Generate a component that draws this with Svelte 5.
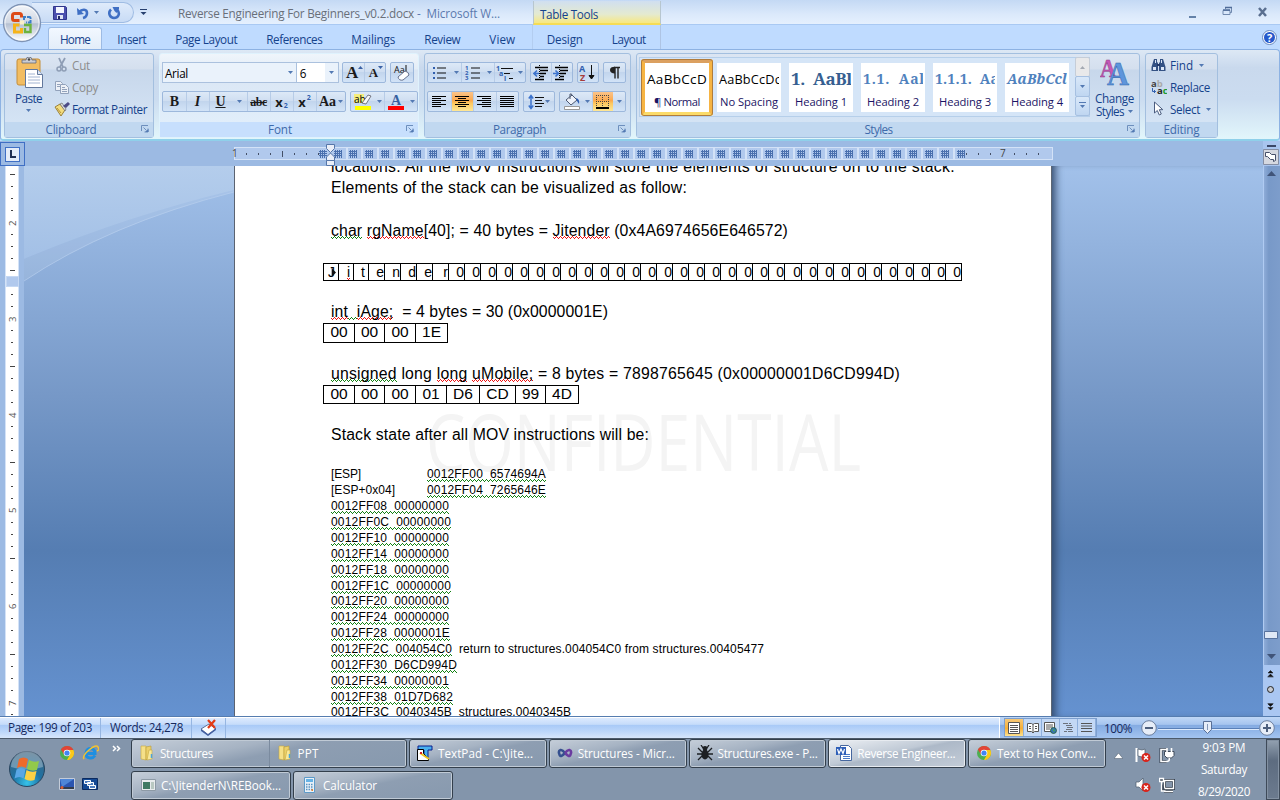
<script>
  // Spreads the letters of a label over the given width.
  function fit(node, w) {
    if (!w) return;
    const n = [...node.textContent].length;
    const now = node.getBoundingClientRect().width;
    node.style.letterSpacing = `${(w - now) / n}px`;
  }

  const tabs = [
    ['Insert', 29], ['Page Layout', 62], ['References', 56], ['Mailings', 44], ['Review', 36], ['View', 26]
  ];
  const styles = [
    ['AaBbCcD', '¶ Normal', 'plain', 60, 46],
    ['AaBbCcDc', 'No Spacing', 'plain small', 62, 58],
    ['1.  AaBl', 'Heading 1', 'h1', 61, 52],
    ['1.1.  Aal', 'Heading 2', 'h2', 62, 52],
    ['1.1.1.  Aa', 'Heading 3', 'h3', 64, 52],
    ['AaBbCcl', 'Heading 4', 'h4', 60, 52]
  ];
  const bytes = [...'Jitender', ...Array(32).fill('0')];
  const byteWidth = (i) => (i < 3 ? 15 : i === 29 ? 17 : 16);
  const gap = '  ';
  const age = [['00', 31], ['00', 30], ['00', 31], ['1E', 32]];
  const mobile = [['00', 31], ['00', 30], ['00', 31], ['01', 31], ['D6', 33], ['CD', 36], ['99', 30], ['4D', 33]];
  const dump = [
    ['0012FF08  00000000', 118], ['0012FF0C  00000000', 120], ['0012FF10  00000000', 118],
    ['0012FF14  00000000', 118], ['0012FF18  00000000', 118], ['0012FF1C  00000000', 120],
    ['0012FF20  00000000', 118], ['0012FF24  00000000', 118], ['0012FF28  0000001E', 119],
    ['0012FF2C  004054C0', 121, '  return to structures.004054C0 from structures.00405477', 312],
    ['0012FF30  D6CD994D', 126], ['0012FF34  00000001', 118], ['0012FF38  01D7D682', 122],
    ['0012FF3C  0040345B', 121, '  structures.0040345B', 119]
  ];
  const cols = [338, 353, ...Array.from({ length: 37 }, (_, i) => 369 + i * 16), 961].filter((x) => x < 962);
  const vnums = [[2, 223], [3, 319], [4, 415], [5, 510], [6, 606], [7, 703]];
  const vticks = Array.from({ length: 46 }, (_, i) => 174 + i * 12).filter((y) => y < 716);
</script>

{#snippet t(s, w, cls = '')}<span class="t {cls}" use:fit={w}>{s}</span>{/snippet}
{#snippet arrow()}<svg class="arrow" width="5" height="3"><path d="M0 0h5L2.500 3z" fill="#5379b3" /></svg>{/snippet}
{#snippet launcher()}<svg class="launch" width="8" height="8" fill="none"><path d="M.5 6V.5H7" stroke="#6d8fbd" /><path d="M2.500 2.500l3 3M7 3.500V7H3.500" stroke="#6d8fbd" /><path d="M4 7h3.500V4z" fill="#5379b3" /></svg>{/snippet}
{#snippet lines(kind)}
  <svg width="16" height="16" shape-rendering="crispEdges"><path stroke="#000" d={
    kind === 'left' ? 'M1 2.500h14M1 4.500h9M1 6.500h14M1 8.500h9M1 10.500h14M1 12.500h9' :
    kind === 'center' ? 'M1 2.500h14M4 4.500h8M1 6.500h14M4 8.500h8M1 10.500h14M4 12.500h8' :
    kind === 'right' ? 'M1 2.500h14M6 4.500h9M1 6.500h14M6 8.500h9M1 10.500h14M6 12.500h9' : 'M1 2.500h14M1 4.500h14M1 6.500h14M1 8.500h14M1 10.500h14M1 12.500h14'} /></svg>
{/snippet}
{#snippet folder()}
  <svg width="14" height="16"><path d="M1 1h5v14l-5-1z" fill="#f5e089" stroke="#c8a93c" stroke-width=".6" /><path d="M6 2l5-1v11l-5 3z" fill="#ecd06a" stroke="#b99b35" stroke-width=".6" /><path d="M9 5h3v9l-5 1z" fill="#f8e89b" stroke="#c8a93c" stroke-width=".6" /><path d="M11.500 9v4" stroke="#4aa4dc" stroke-width="1.500" /></svg>
{/snippet}
{#snippet chrome()}
  <svg width="16" height="16" viewBox="0 0 16 16"><circle cx="8" cy="8" r="7" fill="#4caf50" /><path d="M14.400 5A7 7 0 0 1 8 15l3-5.500L9 5z" fill="#fbc819" /><path d="M1.900 4.500A7 7 0 0 1 14.400 5H8L5 9.500z" fill="#e24436" /><circle cx="8" cy="8" r="3.300" fill="#fff" /><circle cx="8" cy="8" r="2.600" fill="#4285f4" /></svg>
{/snippet}
{#snippet grid(items, cls)}
  <div class="cells {cls}">
    {#each items as [s, w]}<div class="cell" style="width:{w}px">{s}</div>{/each}
  </div>
{/snippet}

<div class="screen">
  <div class="top">
    <header class="title">
      <div class="qat">
        <svg width="14" height="14"><path d="M.5.5h12l1 1v12H.5z" fill="#4b4fae" stroke="#30358c" /><path d="M3 1h8v6H3z" fill="#f4f6ff" /><path d="M4 9h6v4H4z" fill="#dfe4f4" /><path d="M5 10h2v3H5z" fill="#222a66" /></svg>
        <svg class="undo" width="14" height="14" fill="none"><path d="M3 6.500C6 2.500 11 3 11 7c0 2.500-2 4.500-4 5" stroke="#3f6fc4" stroke-width="2.600" /><path d="M1 2l.5 7L8 8z" fill="#3f6fc4" /></svg>
        {@render arrow()}
        <svg class="redo" width="14" height="14" fill="none"><path d="M10.500 4C13.500 8 11 12 7 12S.5 7 4 3.500" stroke="#3f6fc4" stroke-width="2.600" /><path d="M5.500 1H12v2L9.500 7l-2-2z" fill="#3f6fc4" /></svg>
      </div>
      <svg class="more" width="7" height="7"><path d="M0 .5h7" stroke="#27406f" /><path d="M.5 3h6l-3 3z" fill="#27406f" /></svg>
      <div class="doc-title">{@render t('Reverse Engineering For Beginners_v0.2.docx', 236, 'grey')}{@render t(' -  Microsoft W...', 86, 'ms')}</div>
      <div class="tools">{@render t('Table Tools', 58)}</div>
      <svg class="winbtns" width="86" height="14" fill="none">
        <path d="M1 12h7" stroke="#6482a9" stroke-width="2" />
        <path d="M37.500 4V2.500h6v5H42M35 5.500h7v4h-7z" stroke="#7089ae" /><path d="M35 5h7M37 2.500h7" stroke="#4f6c99" stroke-width="1.500" />
        <path d="M71 3l7 8M78 3l-7 8" stroke="#5a6f90" stroke-width="2.500" />
      </svg>
    </header>
    <nav class="tabs">
      <div class="tab home">{@render t('Home', 30)}</div>
      {#each tabs as [s, w]}<div class="tab">{@render t(s, w)}</div>{/each}
      <div class="ctx"><div class="tab">{@render t('Design', 36)}</div><div class="tab">{@render t('Layout', 34)}</div></div>
      <svg class="help" width="15" height="15"><circle cx="7.500" cy="7.500" r="7" fill="#fff" stroke="#6787bd" /><circle cx="7.500" cy="7.500" r="5.500" fill="#2558cc" /><text x="7.500" y="11.500" text-anchor="middle" font-size="11" font-weight="700" fill="#fff">?</text></svg>
    </nav>
    <svg class="orb" width="40" height="40" viewBox="0 0 40 40">
      <defs><linearGradient id="ob" x2="0" y2="1"><stop offset="0" stop-color="#f4f6fa" /><stop offset=".5" stop-color="#cfd6e2" /><stop offset=".52" stop-color="#b5c0d1" /><stop offset="1" stop-color="#fff" /></linearGradient></defs>
      <circle cx="20" cy="20" r="18.500" fill="url(#ob)" stroke="#7f94b5" stroke-width="1.300" /><circle cx="20" cy="20" r="17" fill="none" stroke="#fff" opacity=".7" />
      <g fill="none"><path d="M17.500 17.500h-5q-2 0-2-2v-3q0-2 2-2h5q2 0 2 2v2" stroke="#dd4a17" stroke-width="3" /><path d="M22 17v-3h5.500q1 0 1 1v4.500H24" stroke="#3a7fc9" stroke-width="2" stroke-dasharray="5 1" /><path d="M17.500 22h-5v7h7v-4" stroke="#f6b41a" stroke-width="3" /><path d="M22 22h6.500v7H23v-4" stroke="#6cb33e" stroke-width="2.400" /></g>
      <path d="M18 17.500h4v4h-4z" fill="#fbeec8" />
    </svg>
  </div>

  <section class="ribbon">
    <div class="group clip">
      <div class="body">
        <div class="paste">
          <svg width="28" height="32"><path d="M2 4q0-2 2-2h19q2 0 2 2v23q0 1-2 1H4q-2 0-2-2z" fill="#f2bd62" stroke="#c48d38" /><path d="M7 6V3h4q0-3 3-3t3 3h4v3z" fill="#c9ccd3" stroke="#666b78" stroke-width=".8" /><circle cx="14" cy="2.500" r="1.200" fill="#444" /><path d="M10.500 12.500h12l5 5v13h-17z" fill="#fff" stroke="#62789c" /><path d="M22.500 12.500v5h5" fill="#dbe5f5" stroke="#62789c" /><path d="M13 17h7M13 20h12M13 23h12M13 26h12" stroke="#a2b4d2" /></svg>
          {@render t('Paste', 27)}
          {@render arrow()}
        </div>
        <div class="rows">
          <div><svg width="16" height="16" fill="none" stroke="#8e9db5"><path d="M5 1l4 9M11 1L6 10" stroke-width="1.800" /><circle cx="5" cy="12" r="2" stroke-width="1.500" /><circle cx="10" cy="12" r="2" stroke-width="1.500" /></svg>{@render t('Cut', 18, 'off')}</div>
          <div><svg width="16" height="16" fill="#edf1f7" stroke="#92a2bb"><path d="M1.500 2.500h5l2 2v7h-7z" /><path d="M3 5.500h3M3 7.500h3" /><path d="M6.500 5.500h5l3 3v6h-8z" /><path d="M8 8.500h3M8 10.500h5M8 12.500h5" /></svg>{@render t('Copy', 26, 'off')}</div>
          <div><svg width="16" height="16"><path d="M1 6l5-3 5 6-4 6z" fill="#f3dc7e" stroke="#9b8138" /><path d="M3 7l4 5" stroke="#b6923a" /><path d="M6 3l2-1 4 6-1 2z" fill="#ddd" stroke="#666" stroke-width=".7" /><path d="M9 5l5-4 2 2-4 4z" fill="#4c4b86" /></svg>{@render t('Format Painter', 75)}</div>
        </div>
      </div>
      <div class="label">{@render t('Clipboard', 51)}{@render launcher()}</div>
    </div>

    <div class="group font hot">
      <div class="body two">
        <div class="line">
          <div class="combo name"><span class="ui">{@render t('Arial', 23)}</span>{@render arrow()}</div>
          <div class="combo size"><span class="ui">6</span><i>{@render arrow()}</i></div>
          <div class="bg g44"><b class="btn serif big">A<svg width="5" height="3"><path d="M0 3h5L2.500 0z" fill="#3b62a5" /></svg></b><b class="btn serif mid">A<svg width="5" height="3"><path d="M0 0h5L2.500 3z" fill="#3b62a5" /></svg></b></div>
          <div class="bg g24"><span class="btn"><svg width="18" height="18"><text x="1" y="9" font-size="9" font-family="Open Sans" fill="#111">Aa</text><path d="M13 1v7" stroke="#111" /><path d="M5 13l7-6q4 1 4 4l-6 5q-4 1-5-3z" fill="#fff" stroke="#66718e" /></svg></span></div>
        </div>
        <div class="line l2">
          <div class="bg g183">
            <b class="btn w23 serif">B</b><em class="btn w23 serif bold">I</em><u class="btn w23 serif bold">U</u><span class="btn w15">{@render arrow()}</span>
            <s class="btn w23 serif abc">abc</s><b class="btn w23 ui x">x<sub>2</sub></b><b class="btn w23 ui x">x<sup>2</sup></b><b class="btn serif aa">Aa{@render arrow()}</b>
          </div>
          <div class="bg g67">
            <span class="btn w23"><svg width="18" height="18"><path d="M0 1h10v9H0z" fill="#f4ed7c" /><text x="0" y="10" font-size="10" font-family="Open Sans" fill="#000">ab</text><path d="M8 10l6-8 3 1-5 8z" fill="#f6f7fa" stroke="#5a5a66" stroke-width=".8" /><path d="M1 13h16v4H1z" fill="#ff0" /></svg></span><span class="btn w10">{@render arrow()}</span>
            <span class="btn w23"><svg width="18" height="18"><text x="9" y="12" text-anchor="middle" font-size="14" font-weight="700" font-family="Liberation Serif" fill="#365f9f">A</text><path d="M1 13h16v4H1z" fill="red" /></svg></span><span class="btn w10">{@render arrow()}</span>
          </div>
        </div>
      </div>
      <div class="label">{@render t('Font', 24)}{@render launcher()}</div>
    </div>

    <div class="group para">
      <div class="body two">
        <div class="line">
          <div class="bg g98">
            <span class="btn w23"><svg width="16" height="16"><path d="M5 3.500h9M5 8.500h9M5 13.500h9" stroke="#111" transform="translate(0 -.5)" /><path d="M1 2h2v2H1zM1 7h2v2H1zM1 12h2v2H1z" fill="#315fae" /></svg></span><span class="btn w10">{@render arrow()}</span>
            <span class="btn w23"><svg width="16" height="16"><path d="M6 3.500h9M6 8.500h9M6 13.500h9" stroke="#111" transform="translate(0 -.5)" /><g font-size="6" font-weight="700" fill="#315fae"><text x="0" y="5">1</text><text x="0" y="10">2</text><text x="0" y="15">3</text></g></svg></span><span class="btn w10">{@render arrow()}</span>
            <span class="btn w21"><svg width="18" height="16"><path d="M5 3.500h12M8 8.500h6M13 13.500h4" stroke="#111" /><g font-size="7" font-weight="700" fill="#315fae"><text x="0" y="6">1</text><text x="3" y="11">a</text><text x="8" y="16">i</text></g></svg></span><span class="btn w10">{@render arrow()}</span>
          </div>
          <div class="bg g44">
            {#each ['M6 8.500H1M4 5.500l-3 3 3 3', 'M0 8.500h5M2.500 5.500l3 3-3 3'] as d}
              <span class="btn"><svg width="16" height="16" fill="none"><path d="M2 2.500h13M7 5.500h8M7 8.500h6M7 11.500h4M2 14.500h9" stroke="#000" stroke-width="1.500" /><path d={d} stroke="#3b72cc" stroke-width="1.600" /><path d="M6.500 0v16" stroke="#000" stroke-dasharray="1 1" /></svg></span>
            {/each}
          </div>
          <div class="bg g24"><span class="btn"><svg width="17" height="17"><g font-size="9" font-weight="700"><text x="0" y="8" fill="#315fae">A</text><text x="1" y="16.500" fill="#a63b3b">Z</text></g><path d="M12.500 1v13M10 11.500l2.500 3.500 2.500-3.500z" stroke="#111" fill="#111" /></svg></span></div>
          <div class="bg g24"><span class="btn"><svg width="12" height="13"><path d="M5 1.500h6M6 1v11.500M9 1v11.500" stroke="#222" stroke-width="1.400" fill="none" /><path d="M6 .8Q1 .8 1 4t5 3.500z" fill="#222" /></svg></span></div>
        </div>
        <div class="line l2">
          <div class="bg g92"><span class="btn">{@render lines('left')}</span><span class="btn on">{@render lines('center')}</span><span class="btn">{@render lines('right')}</span><span class="btn">{@render lines('both')}</span></div>
          <div class="bg g32"><span class="btn"><svg width="17" height="16" fill="none"><path d="M7 3.500h9M7 6.500h7M7 9.500h9M7 12.500h7" stroke="#111" /><path d="M3 2v12M.8 4.500L3 1.500l2.200 3M.8 11.500l2.200 3 2.200-3" stroke="#3b72cc" stroke-width="1.500" /></svg>{@render arrow()}</span></div>
          <div class="bg g66">
            <span class="btn w23"><svg width="17" height="17"><path d="M3 7l6-5 5 5-6 5z" fill="#eef2fa" stroke="#4c5871" /><path d="M7 6V1q2-1 2 2" fill="none" stroke="#4c5871" /><path d="M13 5q4 1 3 6l-2-3z" fill="#2c5db3" /><path d="M1.500 13.500h15v3h-15z" fill="#fff" stroke="#999" /></svg></span><span class="btn w9">{@render arrow()}</span>
            <span class="btn on w21"><svg width="14" height="14" fill="none" shape-rendering="crispEdges"><path d="M.5 0v12M6.500 0v12M12.500 0v12M0 .5h13M0 6.500h13" stroke="#444" stroke-dasharray="1 1" /><path d="M0 13h13" stroke="#000" stroke-width="1.500" /></svg></span><span class="btn w12">{@render arrow()}</span>
          </div>
        </div>
      </div>
      <div class="label">{@render t('Paragraph', 53)}{@render launcher()}</div>
    </div>

    <div class="group sty">
      <div class="body">
        <div class="gallery">
          {#each styles as [sample, name, cls, w, nw], i}
            <div class="card" class:sel={i === 0}>
              <div class="sample {cls}">{@render t(sample, w)}</div>
              <div class="nm">{@render t(name, nw)}</div>
            </div>
          {/each}
          <div class="spin">
            <div class="dis"><svg width="5" height="3"><path d="M0 3h5L2.500 0z" fill="#a4a9b2" /></svg></div>
            <div>{@render arrow()}</div>
            <div><svg width="7" height="7"><path d="M0 .5h7" stroke="#5379b3" /><path d="M1 3h5L3.500 6z" fill="#5379b3" /></svg></div>
          </div>
        </div>
        <div class="change">
          <svg width="30" height="28"><g font-family="Liberation Serif" font-weight="700"><text x="0" y="19" font-size="25" fill="#c557b5" stroke="#8c3b86" stroke-width=".5" textLength="16" lengthAdjust="spacingAndGlyphs">A</text><text x="7" y="27" font-size="34" fill="#5d95dc" stroke="#2d5fa8" stroke-width=".5" textLength="22" lengthAdjust="spacingAndGlyphs">A</text></g></svg>
          {@render t('Change', 39)}
          <span class="st">{@render t('Styles', 28)}{@render arrow()}</span>
        </div>
      </div>
      <div class="label">{@render t('Styles', 28)}{@render launcher()}</div>
    </div>

    <div class="group edit">
      <div class="body">
        <div class="rows">
          <div><svg width="16" height="14"><path d="M3 1h3v3l1 1v8H.5V9zM12 1H9v3L8 5v8h6.500V9z" fill="#345284" /><path d="M2 9h3v3H2zM10 9h3v3h-3zM4 2h1v3H4zM10 2h1v3h-1z" fill="#dbe6f7" /><path d="M6 6h3v2H6z" fill="#22386a" /></svg>{@render t('Find', 23)}{@render arrow()}</div>
          <div><svg width="16" height="16" font-family="Open Sans" font-weight="700"><text x="0" y="8" font-size="9.500" fill="#444">a<tspan fill="#aaa">b</tspan></text><text x="6" y="15" font-size="9.500" fill="#222">a<tspan fill="#189a2e">c</tspan></text><path d="M1.500 9v3.500h3M3 11l1.500 1.500L3 14" fill="none" stroke="#315fae" /></svg>{@render t('Replace', 40)}</div>
          <div><svg width="16" height="16"><path d="M3.500 1v11l2.800-2.500 2 4.500 2-1-2-4.300h3.500z" fill="#fff" stroke="#4b5d80" /></svg>{@render t('Select', 30)}{@render arrow()}</div>
        </div>
      </div>
      <div class="label">{@render t('Editing', 36)}</div>
    </div>
  </section>

  <div class="rulerbar">
    <svg width="1263" height="25" shape-rendering="crispEdges">
      <path d="M.5 1.500h24v23H.500z" fill="#9cbae3" stroke="#3f6fc4" /><path d="M5.500 6.500h14v14h-14z" fill="#e4ecf8" stroke="#3f6fc4" /><path d="M11 9v6.500h5" fill="none" stroke="#1f2f52" stroke-width="2" />
      <rect x="234.500" y="6.500" width="818" height="12" fill="#b1c9ed" stroke="#d3e2f7" />
      {#each [246, 258, 270, 294, 306, 318] as x}<path d="M{x}.500 12v2" stroke="#444f66" />{/each}
      <path d="M282.500 10v6" stroke="#444f66" />
      {#each cols as x}
        <path d="M{x + 8}.500 7v11" stroke="#d3e2f7" stroke-width="2" opacity={x < 950 ? 1 : 0} />
        <path d="M{x - 3}.500 9v8m2-8v8m2-8v8m2-8v8M{x - 4} 10.500h8m-8 2h8m-8 2h8" stroke="#4a70ae" />
      {/each}
      <path d="M320.500 9v8m2-8v8m2-8v8M319 10.500h8m-8 2h8m-8 2h8" stroke="#4a70ae" />
      {#each [966, 978, 990, 1014, 1026, 1038] as x}<path d="M{x}.500 12v2" stroke="#444f66" />{/each}
      <text x="232" y="16" font-size="10" fill="#444">1</text><text x="1000" y="16" font-size="10" fill="#444">7</text>
      <g shape-rendering="auto" fill="#e9eef8" stroke="#5576a9"><path d="M326.500 3.500h8v4l-4 4-4-4z" /><path d="M330.500 12l4 4v3.500h-8V16z" /><path d="M326.500 19.500h8v5h-8z" /></g>
    </svg>
    <div class="toggle"><svg width="16" height="25"><path d="M4 5h9" stroke="#3a4768" stroke-width="2" /><path d="M.5 8.500h15v15H.500z" fill="#d5d8e0" stroke="#858ea4" /><path d="M2.500 11.500h4l2 2h4v6l-2 1v-2h-3l-3-3h-2z" fill="#fff" stroke="#46506a" /></svg></div>
  </div>

  <main class="work">
    <div class="vrule">
      <svg width="24" height="550" shape-rendering="crispEdges">
        <path d="M5 0h14v550H5z" fill="#d3e2f7" /><path d="M6 0h12v550H6z" fill="#fff" />
        {#each vticks as y, i}
          {#if i % 8 === 0}<path d="M10 {y - 166}.500h5" stroke="#444" />{:else if i % 8 !== 4}<path d="M11 {y - 166}.500h2" stroke="#444" />{/if}
        {/each}
        <path d="M6 110h12v10H6z" fill="#b1c9ed" stroke="#c5d8f3" />
        {#each vnums as [n, y]}<text transform="translate(16 {y - 163}) rotate(-90)" font-size="9.500" fill="#555">{n}</text>{/each}
      </svg>
    </div>
    <div class="desk left">
      <svg width="210" height="120"><defs><linearGradient id="sw" x2="0" y2="1"><stop offset="0" stop-color="#b4cdec" /><stop offset="1" stop-color="#a3c0e6" /></linearGradient></defs><path d="M0 0h210v24Q100 51 0 93z" fill="url(#sw)" /><path d="M0 93Q100 51 210 24v2Q85 59 0 115z" fill="#fff" opacity=".1" /><path d="M0 115Q85 58 210 26" fill="none" stroke="#b9d0ee" opacity=".65" /></svg>
    </div>
    <article class="page">
      <svg class="mark" width="440" height="70"><text x="0" y="63" font-size="78" font-family="Open Sans" fill="#f4f4f4" textLength="435" lengthAdjust="spacingAndGlyphs">CONFIDENTIAL</text></svg>
      <div class="text">
        <p class="first"><span class="t" use:fit={624}>locations. All the MOV instructions will store the elements of structure on to the stack.</span></p>
        <p class="a">{@render t('Elements of the stack can be visualized as follow:', 356)}</p>
        <p class="b"><span class="t" use:fit={457}><span class="gr">char</span> <span class="rd">rgName</span>[40]; = 40 bytes = <span class="rd">Jitender</span> (0x4A6974656E646572)</span></p>
        <div class="cells name-cells">
          {#each bytes as ch, i}<div class="cell" class:narrow={i < 3} style="width:{byteWidth(i)}px">{#if i === 1}<span class="rd">{ch}</span>{:else}{ch}{/if}</div>{/each}
          <svg class="caret" width="6" height="11"><path d="M.7 1v9L5 5.500z" fill="#111" /></svg>
        </div>
        <p class="c"><span class="t" use:fit={277}><span class="rd">int</span><span class="gr">{gap}</span><span class="rd">iAge;</span>{gap}= 4 bytes = 30 (0x0000001E)</span></p>
        {@render grid(age, 'age')}
        <p class="d"><span class="t" use:fit={569}><span class="gr">unsigned</span> long <span class="rd">long</span> <span class="rd">uMobile;</span> = 8 bytes = 7898765645 (0x00000001D6CD994D)</span></p>
        {@render grid(mobile, 'mobile')}
        <p class="e">{@render t('Stack state after all MOV instructions will be:', 318)}</p>
        <div class="dump">
          <div><span class="key">{@render t('[ESP]', 30)}</span>{@render t('0012FF00  6574694A', 119, 'gr')}</div>
          <div><span class="key">{@render t('[ESP+0x04]', 64)}</span>{@render t('0012FF04  7265646E', 119, 'gr')}</div>
          {#each dump as [s, w, more, mw]}<div>{@render t(s, w, 'gr')}{#if more}{@render t(more, mw)}{/if}</div>{/each}
        </div>
      </div>
    </article>
    <div class="desk right"></div>
    <div class="scroll">
      <svg width="17" height="550"><path d="M4 10h9L8.500 5z" fill="#405479" /><path d="M1.500 465.500h13v7h-13z" fill="#dfe8f6" stroke="#57729f" /><path d="M4 488h9l-4.500 5z" fill="#405479" />
        <path d="M0 499h17v51H0z" fill="#aac7f2" /><path d="M5 507h5L7.500 504.500zM5 510.500h5L7.500 508zM4.500 511h6M5 538h5l-2.500 2.500zM5 541.500h5l-2.500 2.500zM4.500 537.500h6" fill="#111" stroke="#111" stroke-width=".5" /><circle cx="7.500" cy="523.500" r="3" fill="#c5c9d0" stroke="#222" /></svg>
    </div>
  </main>

  <footer class="status">
    <div class="s1">{@render t('Page: 199 of 203', 84)}</div>
    <div class="s2">{@render t('Words: 24,278', 73)}</div>
    <div class="s3"><svg width="18" height="18"><path d="M1 10l8-5 7 5-8 6z" fill="#fff" stroke="#5c6f96" /><path d="M1 10v2l7 5 8-6v-2l-8 6z" fill="#4560a0" /><path d="M8 1l7 8M15 1L8 9" stroke="#e23b16" stroke-width="2.200" /></svg></div>
    <div class="tail">
      <div class="views">
        <span class="on"><svg width="12" height="12"><path d="M.5.500h11v11H.500z" fill="#fff" stroke="#555" /><path d="M2 3.500h8M2 5.500h8M2 7.500h8M2 9.500h8" stroke="#555" /></svg></span>
        <span><svg width="12" height="12"><path d="M.5 1.500h4l1.500 1 1.500-1h4v8h-4L6 11l-1.500-1.500h-4zM6 2.500V11" fill="#fff" stroke="#555" /><path d="M2 4.500h2M2 6.500h2M8 4.500h2M8 6.500h2" stroke="#555" /></svg></span>
        <span><svg width="13" height="12"><path d="M.5.500h10v9H.500z" fill="#fff" stroke="#555" /><path d="M2 3h7M2 5h7M2 7h4" stroke="#555" /><circle cx="9.500" cy="8.500" r="3" fill="#3573b6" stroke="#265b2d" stroke-width=".8" /><path d="M8 7l3 1-1 2z" fill="#48a84e" /></svg></span>
        <span><svg width="11" height="11"><path d="M0 1.500h5M6 1.500h2M3 3.500h6M4 5.500h6M3 7.500h6M1 9.500h3M5 9.500h5" stroke="#6c727c" /></svg></span>
        <span><svg width="11" height="11"><path d="M0 1.500h11M0 4h11M0 6.500h11M0 9.500h11" stroke="#555" /></svg></span>
      </div>
      <div class="pct">{@render t('100%', 28)}</div>
      <svg width="138" height="20"><path d="M18 10.500h101" stroke="#587fb8" /><path d="M18 11.500h101" stroke="#dceafc" /><path d="M68.500 7v8" stroke="#587fb8" />
        {#each [9, 127] as x}<circle cx={x} cy="10" r="7.300" fill="#e6edf8" stroke="#6c7f9e" /><path d="M{x - 4} 10h8" stroke="#4d5f7d" stroke-width="2" />{/each}
        <path d="M127 6v8" stroke="#4d5f7d" stroke-width="2" /><path d="M63.500 3.500h8v8l-4 4-4-4z" fill="#e6edf8" stroke="#586f96" /><path d="M67.500 6v6" stroke="#8497b7" /></svg>
    </div>
  </footer>

  <footer class="taskbar">
    <svg class="start" width="38" height="38" viewBox="0 0 38 38"><defs><radialGradient id="st" cx=".5" cy=".9" r=".9"><stop offset="0" stop-color="#35c3ea" /><stop offset=".45" stop-color="#1e72a3" /><stop offset="1" stop-color="#43657f" /></radialGradient></defs><circle cx="19" cy="19" r="17.500" fill="url(#st)" stroke="#28455f" /><path d="M3 17A16 16 0 0 1 35 17Q19 22 3 17z" fill="#fff" opacity=".3" />
      <path d="M11 9q4.500-3 9 0l-2 9q-4.500-3-9 0z" fill="#ee6a2b" /><path d="M21 10q5 3 10 1l-2 9q-5 2-10-1z" fill="#92c94b" /><path d="M8.500 19.500q4.500-3 9 0l-2 9q-4-3-9 0z" fill="#5aa7e6" /><path d="M18.500 20q5 3 10 1l-2 9q-5 2-10-1z" fill="#fbd145" /></svg>
    <div class="quick">
      {@render chrome()}
      <svg width="17" height="16" fill="none"><path d="M13 10.500Q11 13.500 8 13 3.500 12.500 4 8t5-4.500Q13 4 13 8.500H5" stroke="#1f8fe0" stroke-width="3" /><path d="M2 14Q0 11 7 5t9-3-1 4" stroke="#f2c230" stroke-width="1.500" /></svg>
      <svg width="16" height="12"><path d="M.5.500h15v11H.500z" fill="#2b55b0" stroke="#c3cbd8" /><path d="M1 1h14L3 9z" fill="#4f86d6" /><path d="M1 9h14v2H1z" fill="#333c4c" /><circle cx="3" cy="9.500" r="1.500" fill="#d95c2f" /></svg>
      <svg width="16" height="12"><path d="M.5.500h15v11H.500z" fill="#154a94" stroke="#0b2b60" /><path d="M2.500 2.500h6v3h-6zM5.500 4.500h6v3h-6zM7.500 7.500h6v3h-6z" fill="#4f7fc0" stroke="#fff" /></svg>
    </div>
    <svg class="chev" width="9" height="7" fill="none" stroke="#fff" stroke-width="1.500"><path d="M1 1l2.500 2.500L1 6M5 1l2.500 2.500L5 6" /></svg>
    <div class="tasks">
      <div class="trow">
        <div class="task dbl"><div>{@render folder()}{@render t('Structures', 53)}</div><div>{@render folder()}{@render t('PPT', 21)}</div></div>
        <div class="task"><svg width="16" height="16"><path d="M1 1h14v4h-4v10H7V5H1z" fill="#49b0ef" stroke="#0b1f8c" /><path d="M.5 4.500h6v4l5 5v2h-11z" fill="#fff" stroke="#000" /><path d="M3 8l9 6" stroke="#f0c420" stroke-width="2" /><path d="M3 8h2" stroke="#d22" stroke-width="2" /></svg>{@render t('TextPad - C:\\Jite...', 95)}</div>
        <div class="task"><svg width="16" height="16" fill="none" stroke-width="2.600"><path d="M8 8Q5.500 4.500 3.500 5T2 8t1.500 3T8 8" stroke="#35508f" /><path d="M8 8q2.500-3.500 4.500-3T14 8t-1.500 3T8 8" stroke="#6a3ca0" /></svg>{@render t('Structures - Micr...', 97)}</div>
        <div class="task"><svg width="16" height="16"><ellipse cx="8" cy="9.500" rx="3.600" ry="5" fill="#1d2024" /><circle cx="8" cy="3.500" r="2.400" fill="#1d2024" /><path d="M5 7L1 3M11 7l4-4M5 9H0M11 9h5M5 11l-4 4M11 11l4 4M6 3L4 0M10 3l2-3" stroke="#1d2024" stroke-width="1.300" /></svg>{@render t('Structures.exe - P...', 100)}</div>
        <div class="task act"><svg width="16" height="16"><path d="M4.500.500h8l3 3v12h-11z" fill="#fff" stroke="#46679f" /><path d="M7 9.500h7M7 11.500h7M7 13.500h7" stroke="#4b7bc8" /><path d="M0 2h10v8H0z" fill="#2f5fb8" /><path d="M1.500 4l1.500 4.500L5 4l2 4.500L8.500 4" fill="none" stroke="#fff" stroke-width="1.200" /></svg>{@render t('Reverse Engineer...', 98)}</div>
        <div class="task">{@render chrome()}{@render t('Text to Hex Conv...', 99)}</div>
      </div>
      <div class="trow">
        <div class="task wide"><svg width="16" height="14"><path d="M.5 1.500h14v11H.500z" fill="#e8ecee" stroke="#8d9aa6" /><path d="M2 4h7v7H2z" fill="#3f7a63" /><path d="M10 4h3v7h-3z" fill="#b9c8c2" /></svg>{@render t('C:\\JitenderN\\REBook...', 120)}</div>
        <div class="task wide calc"><svg width="14" height="16"><path d="M1.500.500h10v15h-10z" fill="#e9f1f8" stroke="#5e9bc8" /><path d="M3 2h7v3H3z" fill="#67b3e6" /><path d="M3 7.500h7M3 10h7M3 12.500h7" stroke="#5a93bf" stroke-dasharray="1.500 1" stroke-width="1.500" /><path d="M8.500 12h1.500v2H8.500z" fill="#e9822e" /></svg>{@render t('Calculator', 54)}</div>
      </div>
    </div>
    <svg class="up" width="9" height="6"><path d="M0 5.500h9L4.500 0z" fill="#fff" stroke="#475565" stroke-width=".5" /></svg>
    <div class="tray">
      <svg width="16" height="16"><path d="M1.500 1v14" stroke="#fff" stroke-width="2" /><path d="M3 2l4 1 3-1v7L7 10l-4-1z" fill="#fff" stroke="#4b596a" stroke-width=".7" /><circle cx="11" cy="10.500" r="4.500" fill="#d8251c" /><path d="M9 8.500l4 4M13 8.500l-4 4" stroke="#fff" stroke-width="1.500" /></svg>
      <svg width="16" height="16" fill="none"><path d="M8 2.500H2v12h6" stroke="#3f4b5b" stroke-width="3.200" /><path d="M8 2.500H2v12h6" stroke="#fff" stroke-width="1.600" /><path d="M5.500 4.500h9.500v4l-2.500 2.500h-4.500l-2.500-2.500z" fill="#fff" stroke="#3f4b5b" /><path d="M8 1v4M12.500 1v4" stroke="#fff" stroke-width="1.600" /><path d="M10.300 11v1.500q0 2-3 2" stroke="#fff" stroke-width="1.500" /></svg>
      <svg width="16" height="16"><path d="M1 5h3l4-4v13L4 10H1z" fill="#fff" stroke="#4b596a" stroke-width=".7" /><circle cx="11" cy="10.500" r="4.500" fill="#d8251c" /><path d="M9 8.500l4 4M13 8.500l-4 4" stroke="#fff" stroke-width="1.500" /></svg>
      <svg width="16" height="16" fill="none"><path d="M5.500 3.500h9v8h-9zM5 14.500h9" stroke="#303b49" stroke-width="3" /><path d="M5.500 3.500h9v8h-9zM5 14.500h9" stroke="#fff" stroke-width="1.400" /><path d="M.5 1.500h4v3h-4zM2.500 5v9h4" fill="#3f4b5b" stroke="#fff" stroke-width="1.300" /></svg>
    </div>
    <div class="clock"><span>{@render t('9:03 PM', 43)}</span><span>{@render t('Saturday', 46)}</span><span>{@render t('8/29/2020', 52)}</span></div>
    <div class="peek"></div>
  </footer>
</div>

<style>
  :global(body) { margin: 0; overflow: hidden; }
  .screen { width: 1280px; height: 800px; overflow: hidden; font: 11.7px/14px "Open Sans", "Noto Sans", sans-serif; color: #15428b; background: #bfdbff; }
  .screen svg { display: block; flex: none; }
  .t { display: inline-block; white-space: pre; flex: none; }
  .gr { background: url("data:image/svg+xml,%3Csvg xmlns='http://www.w3.org/2000/svg' width='4' height='3' shape-rendering='crispEdges'%3E%3Cpath d='M0 1h1v1H0zM1 2h1v1H1zM2 1h1v1H2zM3 0h1v1H3z' fill='%23128012'/%3E%3C/svg%3E") repeat-x left bottom; }
  .rd { background: url("data:image/svg+xml,%3Csvg xmlns='http://www.w3.org/2000/svg' width='4' height='3' shape-rendering='crispEdges'%3E%3Cpath d='M0 1h1v1H0zM1 2h1v1H1zM2 1h1v1H2zM3 0h1v1H3z' fill='%23ee1111'/%3E%3C/svg%3E") repeat-x left bottom; }

  .top { position: relative; }
  .orb { position: absolute; left: 2px; top: 3px; }
  .title { height: 25px; box-sizing: border-box; border-bottom: 1px solid #a9c9f3; background: linear-gradient(#c4d9f4, #dbe9fb 60%, #e5f0fe); display: flex; align-items: center; padding-left: 32px; }
  .qat { width: 102px; height: 21px; margin-top: 1px; box-sizing: border-box; border: 1px solid #9fbce3; border-left: 0; border-radius: 0 11px 11px 0; background: linear-gradient(#dfebfb, #c8dbf5); display: flex; align-items: center; padding-left: 21px; }
  .undo { margin-left: 9px; }
  .qat .arrow { margin-left: 4px; }
  .redo { margin-left: 8px; }
  .more { margin: 1px 0 0 6px; }
  .doc-title { width: 355px; padding-left: 31px; margin-top: 3px; height: 16px; font-size: 11.7px; white-space: nowrap; }
  .grey { color: #696f79; }
  .ms { color: #5b79ae; }
  .tools { width: 128px; height: 24px; box-sizing: border-box; margin-top: 1px; padding: 6px 0 0 6px; background: linear-gradient(#d0dff0, #e4ead0 60%, #f7e881); border-bottom: 2px solid #f5dc55; border-left: 1px solid #b7c6cf; border-right: 1px solid #b7c6cf; }
  .winbtns { margin: 0 0 1px 527px; }
  .tabs { height: 24px; display: flex; align-items: flex-end; padding-left: 48px; background: #bfdbff; }
  .tab { height: 15px; padding: 0 14.500px 2px; line-height: 14px; }
  .tab.home { width: 54px; height: 22px; box-sizing: border-box; margin-right: .8px; padding: 4px 0 0 11px; border: 1px solid #9dbbe4; border-bottom: 0; border-radius: 3px 3px 0 0; background: linear-gradient(#f2f8ff, #e3edf9); }
  .ctx { display: flex; align-items: flex-end; height: 24px; border-left: 1px solid #b3cdf0; border-right: 1px solid #aec4e4; margin-left: 2px; }
  .ctx .tab:first-child { padding-left: 14px; }
  .ctx .tab + .tab { padding-right: 14px; }
  .help { margin: 0 0 4px 601px; }

  .ribbon { height: 92px; box-sizing: border-box; display: flex; gap: 5px; padding: 3px 2px 4px 3px; border: 1px solid #8db2e3; border-bottom: 2px solid #8fd0ea; border-radius: 4px; background: linear-gradient(#dde8f5, #c9d9ed 20%, #cbdcf0 55%, #e2f6fb); }
  .group { box-sizing: border-box; height: 85px; border: 1px solid #a3bfdf; border-radius: 3px; background: linear-gradient(#dce6f3, #d4dfee 15px, #c7d7eb 16px, #d8e7f7); display: flex; flex-direction: column; flex: none; }
  .group.hot { border-color: #dff2fd; background: linear-gradient(#eff5fb, #e4edf7 15px, #dae6f4 16px, #e3f0fc); }
  .clip { width: 150px; } .font { width: 260px; } .para { width: 207px; } .sty { width: 504px; } .edit { width: 73px; }
  .body { height: 68px; display: flex; flex: none; }
  .label { height: 15px; position: relative; background: #c1d8f0; color: #3e6aaa; text-align: center; line-height: 14px; padding-right: 16px; }
  .edit .label { padding: 0; }
  .sty .label { padding-right: 19px; }
  .hot .label { background: #c7dffd; padding-right: 18px; }
  .label :global(.launch) { position: absolute; right: 4px; top: 3px; }
  .paste { width: 47px; padding-top: 3px; display: flex; flex-direction: column; align-items: center; gap: 4px; }
  .paste svg:first-child { margin-bottom: -2px; }
  .rows { display: flex; flex-direction: column; padding: 0 0 0 2px; }
  .rows > div { height: 22px; display: flex; align-items: center; gap: 2px; }
  .rows .arrow { margin-left: 3px; }
  .off { color: #8d8d8d; }
  .edit .rows { padding-left: 5px; }
  .edit .rows > div { gap: 3px; }

  .body.two { flex-direction: column; padding-left: 2px; }
  .line { display: flex; height: 22px; margin-top: 8px; }
  .l2 { margin-top: 7px; }
  .combo { height: 21px; box-sizing: border-box; border: 1px solid #abc1de; background: #eaf2fb; color: #000; display: flex; align-items: center; }
  .name { width: 137px; justify-content: space-between; padding: 0 3px 0 2px; }
  .size { width: 43px; margin-right: 3px; background: #fff; justify-content: space-between; border-left: 0; padding-left: 3px; box-sizing: border-box; }
  .size i { height: 19px; width: 13px; background: #eaf2fb; display: flex; align-items: center; justify-content: center; }
  .bg { height: 21px; box-sizing: border-box; border: 1px solid #9db8dc; border-radius: 2px; display: flex; margin-right: 4px; background: linear-gradient(#dde9f7, #cfdef1 45%, #c2d5ed 50%, #d2e3f7); color: #1b1b1b; }
  .btn { flex: 1; display: flex; align-items: center; justify-content: center; line-height: 18px; }
  .btn + .btn { box-shadow: inset 1px 0 #b7cce7; }
  .w23 { flex: 0 0 23px; } .w21 { flex: 0 0 21px; } .w15 { flex: 0 0 15px; } .w12 { flex: 0 0 12px; } .w10 { flex: 0 0 10px; } .w9 { flex: 0 0 9px; }
  .btn.w15, .btn.w12, .btn.w10, .btn.w9 { box-shadow: none; }
  .on { background: linear-gradient(#fbc48a, #fba94e 45%, #fdc860 60%, #fee796); }
  .g44 { width: 45px; } .g24 { width: 24px; } .g183 { width: 184px; } .g67 { width: 68px; margin: 0; } .g98 { width: 99px; } .g92 { width: 92px; } .g32 { width: 32px; } .g66 { width: 67px; }
  .serif { font-family: "Liberation Serif", serif; font-size: 14px; }
  .serif.bold { font-weight: 700; }
  .serif.big { font-size: 17px; } .serif.mid { font-size: 13px; }
  .big svg, .mid svg { margin: -10px -2px 0 0; }
  .abc { font-size: 12px; font-weight: 700; letter-spacing: -.5px; }
  .x { font-size: 13px; }
  .x sub, .x sup { font-size: 7px; color: #315fae; margin-left: 1px; }
  .x sub { margin-top: 8px; } .x sup { margin-bottom: 8px; }
  .aa { gap: 2px; font-size: 14px; padding-left: 1px; }

  .gallery { width: 451px; height: 60px; box-sizing: border-box; margin: 3px 0 0 2px; border: 1px solid #b6cfea; background: #d5e5f7; display: flex; padding-left: 1px; }
  .card { width: 64px; height: 49px; border: 4px solid transparent; background: #fff; background-clip: padding-box; margin-top: 1px; overflow: hidden; flex: none; }
  .card.sel { border: 4px solid #f6b443; border-top-color: #dba060; border-bottom-color: #fbdb69; outline: 1px solid #b07c3c; outline-offset: -1px; border-radius: 3px; }
  .sample { height: 32px; width: 60px; padding-left: 2px; overflow: hidden; line-height: 32px; color: #000; font-size: 13.500px; white-space: nowrap; }
  .sample.small { font-size: 12.700px; }
  .sample.h1, .sample.h2, .sample.h3, .sample.h4 { font-family: "Noto Serif", "DejaVu Serif", "Liberation Serif", serif; font-weight: 700; color: #4f81bd; font-size: 14px; }
  .sample.h1 { color: #365f91; font-size: 17px; }
  .sample.h4 { font-style: italic; }
  .nm { text-align: center; line-height: 13px; color: #1a1464; font-size: 11.200px; }
  .spin { margin-left: auto; width: 14px; display: flex; flex-direction: column; }
  .spin div { flex: 1; display: flex; align-items: center; justify-content: center; border: 1px solid #a6c0e1; margin: -1px -1px 0 0; border-radius: 2px; background: linear-gradient(#d9e8f9, #bfd6f1); }
  .spin .dis { background: #e9e9ea; border-color: #c5cdd8; }
  .change { width: 49px; display: flex; flex-direction: column; align-items: center; padding-top: 4px; line-height: 13px; }
  .change > svg { margin-bottom: 6px; }
  .st { display: flex; align-items: center; gap: 4px; }

  .rulerbar { height: 25px; display: flex; background: #9cbae3; }
  .rulerbar .toggle { width: 17px; background: #a9c5ef; }
  .work { height: 550px; display: flex; }
  .vrule { width: 24px; background: #9cbae3; flex: none; }
  .desk { background: linear-gradient(#a2c1ea 0, #7698c7 42%, #557db2 70%, #6592d0); flex: none; overflow: hidden; }
  .left { width: 210px; }
  .right { width: 212px; box-shadow: inset 8px 0 8px -5px #2f4668; border-left: 1px solid #5d6673; box-sizing: border-box; }
  .page { width: 817px; box-sizing: border-box; border-left: 1px solid #5b6371; background: #fff; position: relative; overflow: hidden; flex: none; color: #000; font: 15.800px/21px "Liberation Sans", Arial, sans-serif; }
  .mark { position: absolute; left: 191px; top: 242px; }
  .text { position: relative; padding-left: 96px; }
  .text p { margin: 0; height: 21px; white-space: nowrap; }
  .text p.first { margin-top: -10px; }
  .text p.b { margin: 22px 0; }
  .text p.c { margin: 20px 0 1px; }
  .text p.d { margin: 20px 0 1px; }
  .text p.e { margin: 20px 0 22px; }
  .cells { display: flex; margin-left: -8px; width: max-content; border: 1px solid #000; border-right: 0; position: relative; }
  .cell { border-right: 1px solid #000; box-sizing: border-box; text-align: center; line-height: 17px; font-size: 14.500px; }
  .cells.age { height: 18px; } .cells.mobile { height: 17px; }
  .age .cell, .mobile .cell { font-size: 15.500px; line-height: 16px; }
  .name-cells { height: 16px; }
  .name-cells .cell { text-align: right; font-size: 14px; }
  .name-cells .cell.narrow { padding-right: 3px; }
  .caret { position: absolute; left: 7px; top: 3px; }
  .dump { font-size: 12px; line-height: 15px; }
  .dump div { height: 16px; display: flex; }
  .dump div:nth-child(8), .dump div:nth-child(15) { height: 15px; }
  .dump .gr { height: 15px; }
  .key { width: 96px; }
  .scroll { width: 17px; box-sizing: border-box; border-left: 1px solid #b0cbf2; background: linear-gradient(90deg, #8eacd8, #7899c8 30%, #7d9dcb); }
  .scroll svg { margin-left: -1px; }

  .status { height: 22px; box-sizing: border-box; border-top: 1px solid #567db0; display: flex; align-items: center; color: #15285c; background: linear-gradient(#fff 0 1px, #dceafe 1px, #c6dcfa 35%, #a9caf7 40%, #bdd7fa 70%, #d7e6fb); }
  .s1, .s2, .s3 { height: 20px; box-sizing: border-box; border-right: 1px solid #96b6e2; padding: 2px 0 0 8px; }
  .s1 { width: 101px; } .s2 { width: 91px; padding-left: 9px; } .s3 { width: 34px; padding-top: 1px; }
  .tail { flex: 1; margin-left: 773px; height: 21px; box-sizing: border-box; display: flex; align-items: center; border-left: 1px solid #fff; padding-left: 5px; background: linear-gradient(#c0d7f6, #a6c5ef 35%, #84abe2 40%, #a3c4f0); }
  .views { display: flex; width: 91px; height: 17px; outline: 1px solid #7d9fce; flex: none; }
  .views span { width: 18px; height: 17px; display: flex; align-items: center; justify-content: center; background: #c3d8f5; border-right: 1px solid #8fb0dd; box-sizing: border-box; flex: none; }
  .views span.on { background: linear-gradient(#f6c878, #f5ae36 55%, #fde291); width: 19px; }
  .pct { padding: 0 8px 0 8px; }

  .taskbar { height: 62px; box-sizing: border-box; border-top: 1px solid #4c5a6b; display: flex; background: #8395ab; color: #fff; }
  .start { margin: 11px 0 0 8px; }
  .quick { margin: 6px 0 0 13px; width: 40px; height: 46px; display: grid; grid-template: 22px 32px / 23px 17px; align-items: center; }
  .quick svg:nth-child(-n+2) { margin-top: -6px; }
  .quick svg:nth-child(n+3) { margin-top: 1px; }
  .chev { margin: 6px 0 0 13px; }
  .tasks { margin-left: 10px; width: 974px; flex: none; }
  .trow { display: flex; gap: 2px; height: 32px; }
  .task { width: 137.750px; height: 29px; box-sizing: border-box; border: 1px solid #333f4c; border-radius: 3px; display: flex; align-items: center; padding: 0 0 2px 7px; gap: 5px; font-size: 11.700px; background: linear-gradient(168deg, #c5ced9 0, #a6b3c3 35%, #8e9eb2 50%, #8799ae); box-shadow: inset 0 0 0 1px #c0cad5; white-space: nowrap; flex: none; }
  .task.dbl { width: 276px; padding: 0; gap: 0; }
  .dbl > div { width: 137px; height: 27px; display: flex; align-items: center; gap: 6px; padding: 0 0 2px 8px; box-sizing: border-box; }
  .dbl > div + div { border-left: 1px solid #7b8b9f; width: 138px; }
  .task.act { background: linear-gradient(168deg, #eef1f5, #bfc9d5 45%, #adb9c8 50%, #c3ccd7); box-shadow: inset 0 0 0 1px #e7ebf0; }
  .task.wide { width: 160px; padding-left: 9px; gap: 4px; }
  .task.calc { gap: 6px; }
  .up { margin: 14px 0 0 9px; }
  .tray { display: grid; grid-template: 30px 30px / 24px 20px; margin: 8px 0 0 12px; width: 44px; height: 54px; }
  .clock { width: 80px; margin: -3px 0 0 5px; display: flex; flex-direction: column; align-items: center; line-height: 22px; }
  .clock span { height: 22px; }
  .peek { width: 12px; margin-left: auto; border: 1px solid #3e4a59; box-shadow: inset 0 0 0 1px #8391a2; background: linear-gradient(#93a1b1, #5d6c80 35%, #6c7b8f); }
</style>
